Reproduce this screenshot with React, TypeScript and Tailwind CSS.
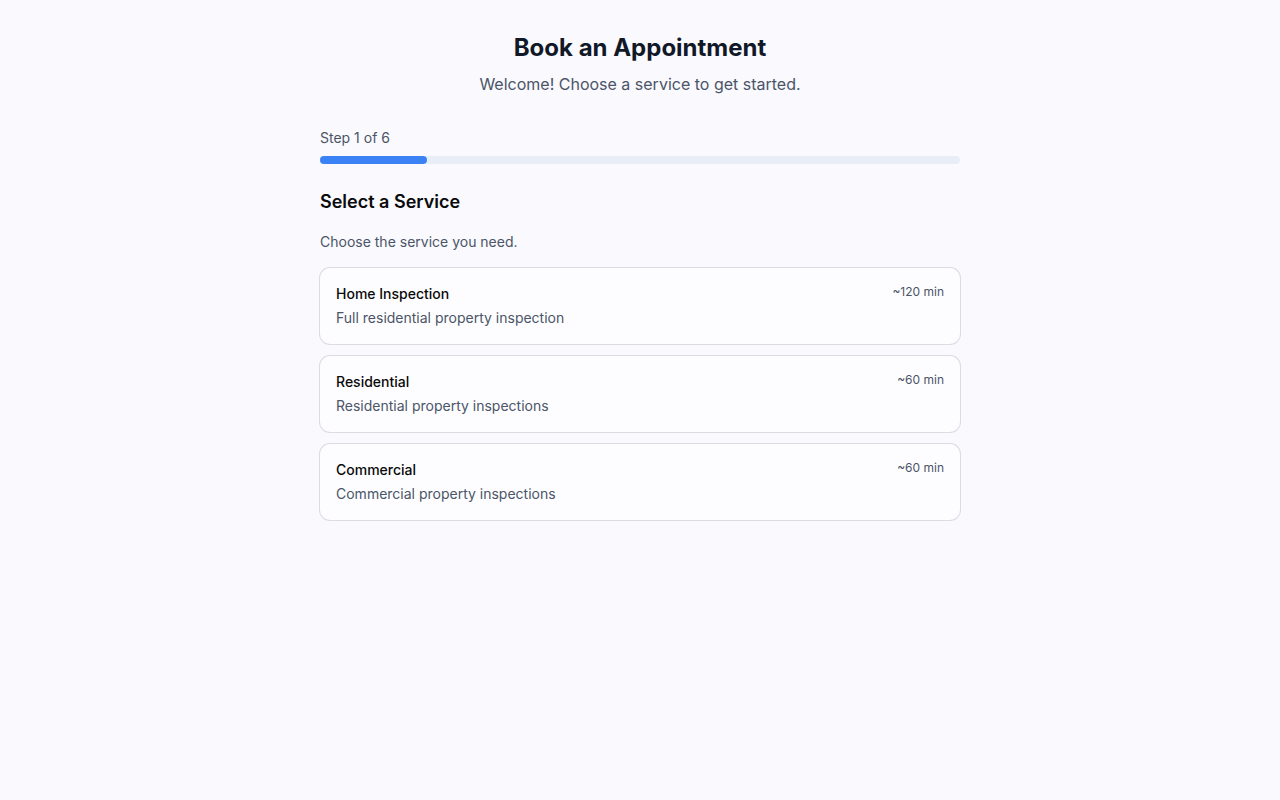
const SERVICES = [
  { name: "Home Inspection", desc: "Full residential property inspection", mins: 120 },
  { name: "Residential", desc: "Residential property inspections", mins: 60 },
  { name: "Commercial", desc: "Commercial property inspections", mins: 60 },
];

export default function App() {
  const step = 1;
  const total = 6;
  const pct = (step / total) * 100;

  return (
    <div className="min-h-screen bg-[#f9f9fe] font-['Inter',sans-serif] text-[#0f172a]">
      <div className="mx-auto w-[640px] pt-8">
        <h1 className="text-center text-2xl font-bold leading-8 text-[#111827]">Book an Appointment</h1>
        <p className="mt-2 text-center text-base leading-6 text-[#4b5567]">
          Welcome! Choose a service to get started.
        </p>

        <div className="mt-8">
          <p className="text-sm leading-5 text-[#4b5567]">
            Step {step} of {total}
          </p>
          <div className="mt-2 h-2 w-full rounded-full bg-[#e9edf5]">
            <div className="h-2 rounded-full bg-[#3b82f6]" style={{ width: `${pct}%` }} />
          </div>
        </div>

        <h2 className="mt-6 text-lg font-semibold leading-7 text-[#0a0a0a]">Select a Service</h2>
        <p className="mt-4 text-sm leading-5 text-[#4b5567]">Choose the service you need.</p>

        <div className="mt-4 flex flex-col gap-3">
          {SERVICES.map((s) => (
            <button
              key={s.name}
              className="flex items-start justify-between rounded-[10px] bg-[#fdfdff] p-4 text-left ring-1 ring-[#dcdde4]"
            >
              <div className="flex flex-col gap-1">
                <span className="text-sm font-medium leading-5 text-[#0a0a0a]">{s.name}</span>
                <span className="text-sm leading-5 text-[#4b5567]">{s.desc}</span>
              </div>
              <span className="text-xs leading-4 text-[#4b5567]">~{s.mins} min</span>
            </button>
          ))}
        </div>
      </div>
    </div>
  );
}
